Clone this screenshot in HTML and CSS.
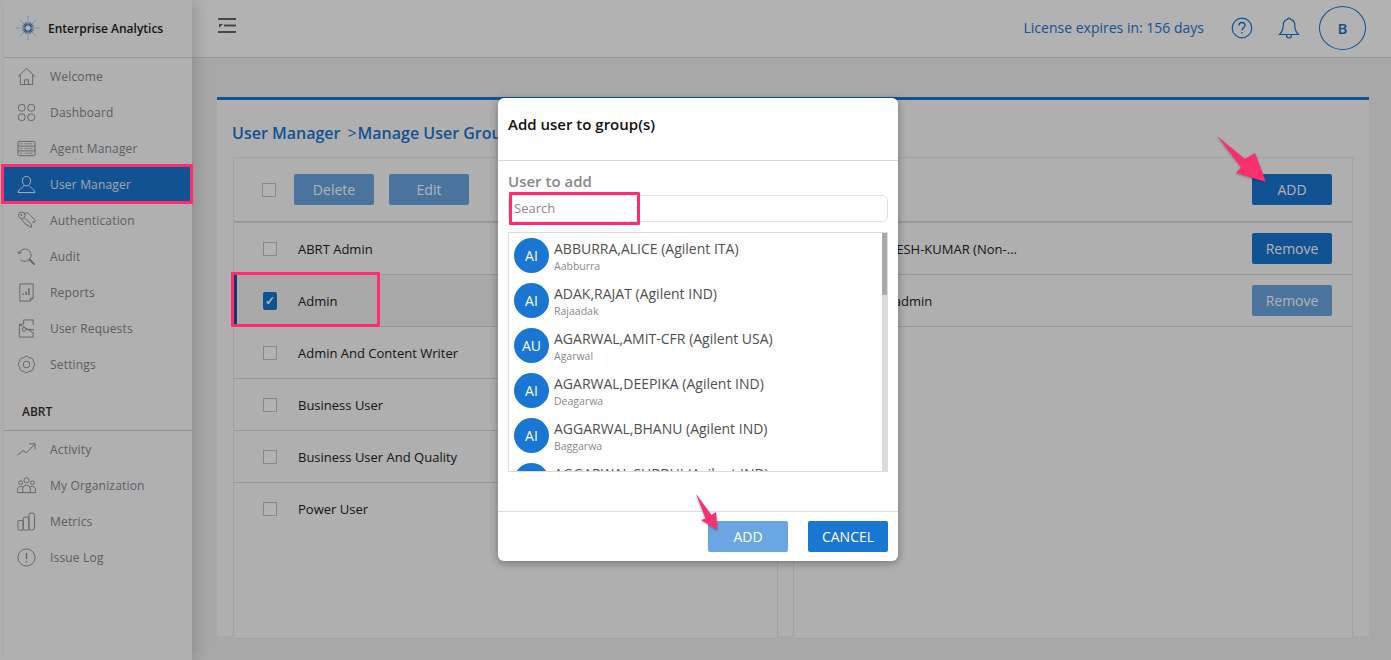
FILE: index.html
```html
<!DOCTYPE html>
<html lang="en">
<head>
<meta charset="utf-8">
<title>Enterprise Analytics</title>
<link rel="stylesheet" href="styles.css">
</head>
<body>
<div class="app">
  <aside class="sidebar">
    <div class="brand">
      <svg class="logo" viewBox="0 0 24 24" fill="none" stroke="#3f80c4">
        <g stroke-width=".9" stroke-dasharray="1.5 1" opacity=".6">
          <path d="M12 0v6M12 18v6M0 12h6M18 12h6"/>
          <path d="M3.5 3.5l4.5 4.5M16 16l4.5 4.5M20.5 3.5L16 8M8 16l-4.5 4.5"/>
        </g>
        <g stroke-width="1.2">
          <path d="M12 6.500v11M6.500 12h11M8 8l8 8M16 8l-8 8M9.500 6.500l5 11M14.500 6.500l-5 11M6.500 9.500l11 5M6.500 14.500l11-5"/>
        </g>
        <circle cx="12" cy="12" r="2.500" fill="#fff" stroke="none"/>
      </svg>
      <span class="brand-name">Enterprise Analytics</span>
    </div>
    <nav class="nav">
      <a class="nav-item"><svg class="ico" viewBox="0 0 20 20"><path d="M1 10L10 1.500l9 8.500M3.500 8v10.500h13V8M8 18.500v-5h4v5"/></svg>Welcome</a>
      <a class="nav-item"><svg class="ico" viewBox="0 0 20 20"><circle cx="5" cy="5" r="3.700"/><circle cx="15" cy="5" r="3.700"/><circle cx="5" cy="15" r="3.700"/><circle cx="15" cy="15" r="3.700"/></svg>Dashboard</a>
      <a class="nav-item"><svg class="ico" viewBox="0 0 20 20"><rect x="1" y="2.500" width="18" height="15" rx="1"/><path d="M1 7.500h18M1 12.500h18"/><path d="M3 5h3M3 10h3M3 15h3M8 5h9M8 10h9M8 15h9" stroke-dasharray="1 .7"/></svg>Agent Manager</a>
      <a class="nav-item is-active"><svg class="ico" viewBox="0 0 20 20"><path d="M10 1.500c2.700 0 4.300 2 4.300 4.500 0 3-1.900 5.500-4.300 5.500S5.700 9 5.700 6c0-2.500 1.600-4.500 4.300-4.500z"/><path d="M7.200 11c0 2.500-5.200 2.500-6 7.500h17.600c-.8-5-6-5-6-7.500"/></svg>User Manager</a>
      <a class="nav-item"><svg class="ico" viewBox="0 0 20 20"><circle cx="5" cy="4.500" r="3.500"/><circle cx="4.500" cy="4" r=".8"/><path d="M7.500 7l7.500 7 .5 3-2.500-.5-.8-1.500-1.200.5-1-1.500-1 0L4.500 8"/><path d="M8.500 2.500c2-1.500 3.500-.5 4.500 1l6 6-.5 2.500-2.500-.5"/></svg>Authentication</a>
      <a class="nav-item"><svg class="ico" viewBox="0 0 20 20"><path d="M2 7a6.500 6.500 0 1 1 1.500 6M.500 4.500L2 7l2.800-1.500"/><path d="M12.500 12.500l6 6" stroke-width="2"/></svg>Audit</a>
      <a class="nav-item"><svg class="ico" viewBox="0 0 20 20"><path d="M3 1h14v15l-3 3H3zM14 19v-3h3"/><path d="M6.500 11v1.500M9.500 9v3.500M12.500 5.500v7" stroke-width="1.500"/></svg>Reports</a>
      <a class="nav-item"><svg class="ico" viewBox="0 0 20 20"><path d="M7 1h10v5.500M17 14.500V19H2.500V5.500zM7 1v4.500H2.500"/><circle cx="7.500" cy="11" r="2"/><path d="M9.500 11h8v1.500M14.500 11v1.500"/></svg>User Requests</a>
      <a class="nav-item"><svg class="ico" viewBox="0 0 20 20"><path d="M7.130 3.070A3.200 3.200 0 0 1 12.870 3.070A3.200 3.200 0 0 1 16.930 7.130A3.200 3.200 0 0 1 16.930 12.870A3.200 3.200 0 0 1 12.870 16.930A3.200 3.200 0 0 1 7.130 16.930A3.200 3.200 0 0 1 3.070 12.870A3.200 3.200 0 0 1 3.070 7.130A3.200 3.200 0 0 1 7.130 3.070z"/><circle cx="10" cy="10" r="3.500"/></svg>Settings</a>
    </nav>
    <div class="nav-heading">ABRT</div>
    <nav class="nav">
      <a class="nav-item"><svg class="ico" viewBox="0 0 20 20"><path d="M.500 16l6-5 3.500 2.500L19 4M12.500 4H19v6"/></svg>Activity</a>
      <a class="nav-item"><svg class="ico" viewBox="0 0 20 20"><circle cx="10" cy="4.500" r="2.700"/><circle cx="3.800" cy="7" r="2"/><circle cx="16.200" cy="7" r="2"/><path d="M.500 17.500v-3c0-2 1.500-3.500 3.300-3.500s2.700.5 3.200 1.500M19.500 17.500v-3c0-2-1.500-3.500-3.300-3.500s-2.700.5-3.200 1.500M6 17.500v-4c0-2 2-4 4-4s4 2 4 4v4M.500 17.500h19"/></svg>My Organization</a>
      <a class="nav-item"><svg class="ico" viewBox="0 0 20 20"><rect x="1" y="9" width="5.500" height="10" rx="1"/><rect x="6.500" y="5.500" width="6" height="13.500" rx="1"/><rect x="12.500" y="1" width="6" height="18" rx="2.500"/></svg>Metrics</a>
      <a class="nav-item"><svg class="ico" viewBox="0 0 20 20"><circle cx="10" cy="10" r="9"/><path d="M10 5v6.500M10 14v1.200" stroke-width="1.400"/></svg>Issue Log</a>
    </nav>
  </aside>

  <div class="main">
    <header class="topbar">
      <svg class="menu-toggle" viewBox="0 0 18 16"><path d="M0 1h18M0 14h18M6 7.500h12" stroke="#666" stroke-width="2" fill="none"/><path d="M1 6h4L1 10z" fill="#666"/></svg>
      <div class="topbar-right">
        <span class="license">License expires in: 156 days</span>
        <svg class="top-ico" viewBox="0 0 22 22"><circle cx="11" cy="11" r="9.800"/><path d="M8 8.500c0-2 1.300-3 3-3s3 1 3 2.800c0 2.500-3 2.500-3 5M11 15v1.500" stroke-width="1.400"/></svg>
        <svg class="top-ico bell" viewBox="0 0 22 22"><path d="M11 1c-.8 0-1.200.5-1.200 1.200C6.500 3 5.200 5.500 5.200 8.500c0 4.500-1 6.500-3.700 9h19c-2.700-2.500-3.700-4.500-3.700-9 0-3-1.300-5.500-4.600-6.300C12.200 1.500 11.800 1 11 1zM8.500 18c0 2 1 3 2.500 3s2.500-1 2.500-3"/></svg>
        <div class="avatar-top">B</div>
      </div>
    </header>
    <div class="content">
      <section class="panel">
        <h1 class="crumbs"><span>User Manager</span><span class="crumb-sep">&gt;</span><span>Manage User Groups</span></h1>
        <div class="cards">
          <div class="card">
            <div class="toolbar">
              <span class="check"></span>
              <button class="btn is-faded">Delete</button>
              <button class="btn is-faded">Edit</button>
            </div>
            <div class="row"><span class="check"></span><span class="row-name">ABRT Admin</span></div>
            <div class="row is-selected"><span class="check is-checked">✓</span><span class="row-name">Admin</span></div>
            <div class="row"><span class="check"></span><span class="row-name">Admin And Content Writer</span></div>
            <div class="row"><span class="check"></span><span class="row-name">Business User</span></div>
            <div class="row"><span class="check"></span><span class="row-name">Business User And Quality</span></div>
            <div class="row no-line"><span class="check"></span><span class="row-name">Power User</span></div>
          </div>
          <div class="card">
            <div class="toolbar toolbar-end"><button class="btn">ADD</button></div>
            <div class="row row-member"><span class="row-name">BALAJEE-PRADESH-KUMAR (Non-...</span><button class="btn">Remove</button></div>
            <div class="row row-member"><span class="row-name">ABRT-Groups-admin</span><button class="btn is-faded">Remove</button></div>
          </div>
        </div>
      </section>
    </div>
  </div>
</div>

<div class="overlay"></div>

<div class="dialog">
  <div class="dialog-head">Add user to group(s)</div>
  <div class="dialog-body">
    <label class="field-label" for="user-search">User to add</label>
    <input class="search" id="user-search" type="text" placeholder="Search">
    <div class="list">
      <div class="user"><span class="user-av">AI</span><div><div class="user-name">ABBURRA,ALICE (Agilent ITA)</div><div class="user-id">Aabburra</div></div></div>
      <div class="user"><span class="user-av">AI</span><div><div class="user-name">ADAK,RAJAT (Agilent IND)</div><div class="user-id">Rajaadak</div></div></div>
      <div class="user"><span class="user-av">AU</span><div><div class="user-name">AGARWAL,AMIT-CFR (Agilent USA)</div><div class="user-id">Agarwal</div></div></div>
      <div class="user"><span class="user-av">AI</span><div><div class="user-name">AGARWAL,DEEPIKA (Agilent IND)</div><div class="user-id">Deagarwa</div></div></div>
      <div class="user"><span class="user-av">AI</span><div><div class="user-name">AGGARWAL,BHANU (Agilent IND)</div><div class="user-id">Baggarwa</div></div></div>
      <div class="user"><span class="user-av">AI</span><div><div class="user-name">AGGARWAL,SUBBHI (Agilent IND)</div><div class="user-id">Saggarwa</div></div></div>
      <div class="scroll-track"><div class="scroll-thumb"></div></div>
    </div>
  </div>
  <div class="dialog-foot">
    <button class="btn btn-add">ADD</button>
    <button class="btn btn-cancel">CANCEL</button>
  </div>
</div>

<div class="mark mark-nav"></div>
<div class="mark mark-row"></div>
<div class="mark mark-search"></div>
<svg class="arrow arrow-top" viewBox="0 0 60 56"><path d="M1 0L29 23 39 17 50 46 20 37 25 31z"/></svg>
<svg class="arrow arrow-bottom" viewBox="0 0 30 46"><path d="M1 1L16.500 22 21 19 22.500 37 6 27 10.500 25.500z"/></svg>
</body>
</html>
```
FILE: styles.css
```css
* { box-sizing: border-box; }
html, body { margin: 0; height: 100%; }
body {
  width: 1391px;
  height: 660px;
  overflow: hidden;
  position: relative;
  background: #fff;
  font-family: "Open Sans", "Liberation Sans", sans-serif;
  color: #333;
}
.app { display: flex; height: 660px; padding-left: 4px; }

/* Sidebar */
.sidebar {
  width: 188px;
  flex: none;
  background: #fcfcfc;
  box-shadow: 4px 0 14px rgba(0, 0, 0, .16);
  position: relative;
  z-index: 1;
}
.brand {
  height: 58px;
  display: flex;
  align-items: center;
  padding: 0 0 1px 12px;
  border-bottom: 1px solid #dcdcdc;
}
.logo { width: 24px; height: 24px; flex: none; }
.brand-name { margin-left: 8px; font-size: 12px; font-weight: 600; color: #222; }
.nav-item {
  height: 36px;
  display: flex;
  align-items: center;
  padding-left: 13px;
  font-size: 12px;
  letter-spacing: .18px;
  color: #85898f;
}
.ico {
  width: 19px;
  height: 19px;
  margin-right: 14px;
  flex: none;
  fill: none;
  stroke: #8f8f8f;
  stroke-width: 1;
}
.nav-item.is-active { background: #1976d2; color: #e4eef9; }
.is-active .ico { stroke: #fff; }
.nav-heading {
  height: 49px;
  padding: 21px 0 0 18px;
  border-bottom: 1px solid #cfcfcf;
  font-size: 12px;
  font-weight: 600;
  color: #333;
}

/* Main */
.main { flex: 1; min-width: 0; background: #f1f1f1; }
.topbar {
  height: 58px;
  padding: 0 25px 1px 26px;
  display: flex;
  align-items: center;
  justify-content: space-between;
  background: #fff;
  border-bottom: 1px solid #dcdcdc;
}
.menu-toggle { width: 18px; height: 16px; margin-top: -4px; }
.topbar-right { display: flex; align-items: center; }
.license { padding-bottom: 2px; font-size: 14px; color: #1976d2; margin-right: 27px; }
.top-ico { width: 22px; height: 22px; fill: none; stroke: #1976d2; stroke-width: 1.2; margin-right: 25px; }
.top-ico.bell { margin-right: 19px; }
.avatar-top {
  width: 47px;
  height: 44px;
  border: 1px solid #1976d2;
  border-radius: 50%;
  display: flex;
  align-items: center;
  justify-content: center;
  color: #1976d2;
  font-size: 15px;
  font-weight: 600;
}
.content { padding: 39px 22px 0 25px; }
.panel {
  height: 539px;
  padding: 0 16px;
  background: #fbfbfb;
  border-top: 3px solid #1976d2;
}
.crumbs {
  height: 57px;
  margin: 0 0 0 -1px;
  padding-top: 22px;
  font-size: 16px;
  line-height: 22px;
  font-weight: 600;
  color: #1976d2;
  white-space: nowrap;
}
.crumb-sep { margin: 0 1px 0 7px; font-weight: 400; }
.cards { display: grid; grid-template-columns: 545px 560px; column-gap: 15px; }
.card { height: 482px; border: 1px solid #e8e8e8; background: #fbfbfb; }
.toolbar {
  height: 65px;
  padding: 0 20px 0 28px;
  display: flex;
  align-items: center;
  border-bottom: 2px solid #dadada;
}
.toolbar-end { justify-content: flex-end; }
.toolbar .check { margin-right: 18px; }
.toolbar .btn + .btn { margin-left: 15px; }
.row {
  height: 52px;
  padding-left: 29px;
  display: flex;
  align-items: center;
  border-bottom: 1px solid #dadada;
}
.row.no-line { border-bottom: 0; }
.row.is-selected { padding-left: 26px; border-left: 3px solid #175395; background: #f2f2f2; }
.row-member { padding: 0 20px 0 15px; justify-content: space-between; }
.row-name { margin-left: 21px; font-size: 13px; color: #222; }
.row-member .row-name { margin-left: 0; }
.check {
  width: 14px;
  height: 14px;
  flex: none;
  border: 1px solid #c4c4c4;
  background: #fff;
}
.check.is-checked {
  border: 0;
  border-radius: 2px;
  background: #1976d2;
  color: #fff;
  font-size: 12px;
  font-weight: 700;
  line-height: 18px;
  height: 18px;
  text-align: center;
}
.btn {
  width: 80px;
  height: 31px;
  padding: 0;
  border: 0;
  border-radius: 2px;
  background: #1976d2;
  color: #fff;
  font-family: inherit;
  font-size: 14px;
}
.btn.is-faded { background: #6aa7e2; }

/* Modal layer */
.overlay { position: absolute; inset: 0; background: rgba(0, 0, 0, .3); z-index: 5; }
.dialog {
  position: absolute;
  left: 498px;
  top: 98px;
  width: 400px;
  height: 463px;
  z-index: 6;
  background: #fff;
  border-radius: 6px;
  box-shadow: 0 2px 8px rgba(0, 0, 0, .35);
  display: flex;
  flex-direction: column;
}
.dialog-head {
  height: 63px;
  padding: 16px 10px 0;
  border-bottom: 1px solid #d8d8d8;
  font-size: 15px;
  line-height: 20px;
  font-weight: 600;
  color: #111;
}
.dialog-body { flex: 1; padding: 10px 10px 0; }
.field-label {
  display: block;
  height: 24px;
  font-size: 15px;
  line-height: 20px;
  font-weight: 600;
  color: #888;
}
.search {
  display: block;
  width: 380px;
  height: 27px;
  padding: 0 5px 2px;
  border: 1px solid #e2e2e2;
  border-radius: 6px;
  outline: 0;
  font-family: inherit;
  font-size: 13px;
}
.search::placeholder { color: #888; opacity: 1; }
.list {
  position: relative;
  height: 240px;
  margin-top: 10px;
  padding-top: 5px;
  overflow: hidden;
  border: 1px solid #dcdcdc;
}
.user { height: 45px; padding-left: 5px; display: flex; align-items: flex-start; }
.user-av {
  width: 35px;
  height: 35px;
  margin-right: 5px;
  flex: none;
  border-radius: 50%;
  background: #1976d2;
  color: #fff;
  font-size: 14px;
  line-height: 35px;
  text-align: center;
}
.user-name { font-size: 14px; line-height: 20px; padding-top: 1px; color: #4f4f4f; }
.user-id { font-size: 10.5px; line-height: 14px; color: #888; }
.scroll-track {
  position: absolute;
  top: 0;
  right: 0;
  bottom: 0;
  width: 5px;
  background: #dcdcdc;
}
.scroll-thumb { height: 62px; background: #a9a9a9; }
.dialog-foot {
  height: 50px;
  padding: 9px 10px 0;
  display: flex;
  justify-content: flex-end;
  gap: 20px;
  border-top: 1px solid #dedede;
}
.btn-add { background: #69a6e2; }
.btn-add, .btn-cancel { font-size: 14px; }

/* Annotations */
.mark { position: absolute; z-index: 7; border: 3px solid #ff2d6f; border-radius: 1px; }
.mark-nav { left: 1px; top: 164px; width: 192px; height: 40px; }
.mark-row { left: 231px; top: 272px; width: 149px; height: 55px; }
.mark-search { left: 509px; top: 192px; width: 131px; height: 33px; }
.arrow { position: absolute; z-index: 8; fill: #fb2f6d; filter: drop-shadow(0 1px 1px rgba(0, 0, 0, .3)); }
.arrow-top { left: 1216px; top: 136px; width: 60px; height: 56px; }
.arrow-bottom { left: 695px; top: 493px; width: 30px; height: 46px; }
```
